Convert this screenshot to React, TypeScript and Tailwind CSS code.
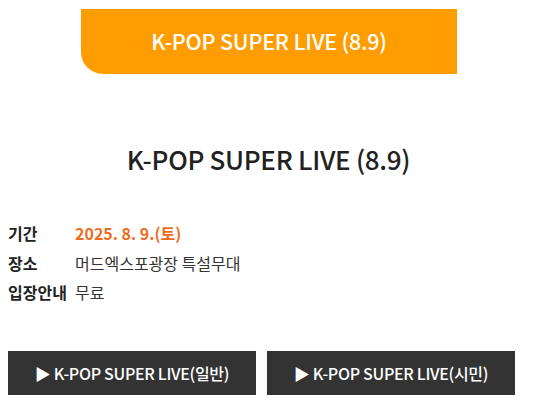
const font = {fontFamily: '"Noto Sans CJK KR", "Noto Sans", sans-serif'};

const info = [
  {label: '기간', value: '2025. 8. 9.(토)', accent: true},
  {label: '장소', value: '머드엑스포광장 특설무대'},
  {label: '입장안내', value: '무료'},
];

export default function App() {
  return (
    <div className="w-[537px] h-[411px] bg-white overflow-hidden" style={font}>
      <div className="pt-[9px] pl-[81px]">
        <div className="w-[376px] h-[65px] bg-[#ff9c00] rounded-bl-[22px] flex items-center justify-center text-white text-[21.5px] font-medium tracking-[-0.2px]">
          K-POP SUPER LIVE (8.9)
        </div>
      </div>

      <h1 className="mt-[66px] text-center text-[26px] leading-[38px] text-[#222] font-medium tracking-[-0.3px]">
        K-POP SUPER LIVE (8.9)
      </h1>

      <dl className="mt-[44px] px-[8px] flex flex-col gap-[7.5px] text-[16px] leading-[22px]">
        {info.map((row) => (
          <div key={row.label} className="flex">
            <dt className="w-[67px] font-bold text-[#222]">{row.label}</dt>
            <dd className={row.accent ? 'font-bold text-[#f26b1d]' : 'text-[#333]'}>
              {row.value}
            </dd>
          </div>
        ))}
      </dl>

      <div className="mt-[48px] px-[8px] flex gap-[11px]">
        <a className="w-[248px] h-[44px] bg-[#333] flex items-center justify-center text-white text-[16px] font-medium tracking-[-0.3px]">
          ▶ K-POP SUPER LIVE(일반)
        </a>
        <a className="w-[248px] h-[44px] bg-[#333] flex items-center justify-center text-white text-[16px] font-medium tracking-[-0.3px]">
          ▶ K-POP SUPER LIVE(시민)
        </a>
      </div>
    </div>
  );
}
